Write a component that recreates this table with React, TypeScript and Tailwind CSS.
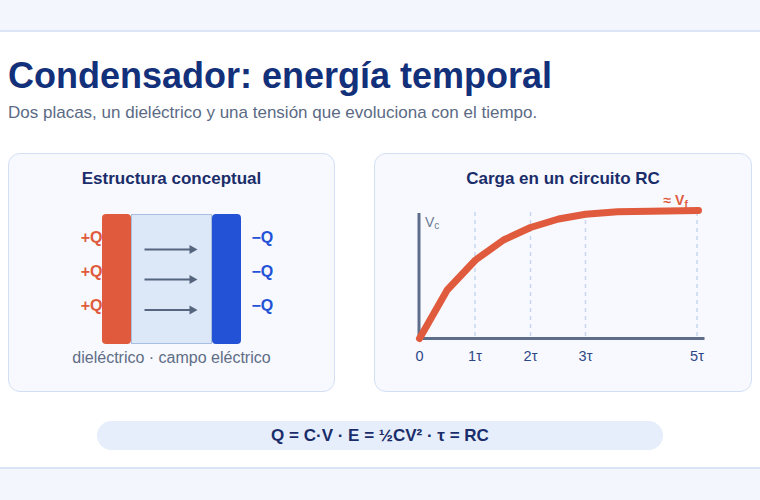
import React from "react";

const RED = "#e05b3d";

function Arrow({ y }: { y: number }) {
  return (
    <g>
      <line x1={14} y1={y} x2={61} y2={y} stroke="#56657e" strokeWidth={2} />
      <polygon points={`59,${y - 4.5} 67,${y} 59,${y + 4.5}`} fill="#56657e" />
    </g>
  );
}

function Structure() {
  return (
    <div className="w-[327px] h-[239px] rounded-[12px] border-[1.5px] border-[#d3dff4] bg-[#f7f9fe] flex flex-col items-center pt-[14.5px]">
      <div className="text-[17px] leading-5 font-bold text-[#1a2d6a]">Estructura conceptual</div>
      <div className="mt-[25px] h-[130px] flex">
        <div className="w-10 flex flex-col items-end pt-[14px] gap-[14px] text-[16px] leading-5 font-bold text-[#e05b3d] relative z-10 -mr-px">
          <span>+Q</span>
          <span>+Q</span>
          <span>+Q</span>
        </div>
        <div className="w-[29px] rounded-[4px] bg-[#e05b3d]" />
        <div className="w-[81px] bg-[#dce7f7] border-[1.5px] border-[#a9bfe2]">
          <svg width="78" height="127" viewBox="1.5 1.5 78 127" className="block">
            <Arrow y={36} />
            <Arrow y={66} />
            <Arrow y={96.5} />
          </svg>
        </div>
        <div className="w-[29px] rounded-[4px] bg-[#2452d6]" />
        <div className="w-10 flex flex-col items-start pl-[11px] pt-[14px] gap-[14px] text-[16px] leading-5 font-bold text-[#2452d6]">
          <span>−Q</span>
          <span>−Q</span>
          <span>−Q</span>
        </div>
      </div>
      <div className="mt-1 text-[16px] leading-5 text-[#5f6d86]">dieléctrico · campo eléctrico</div>
    </div>
  );
}

function Chart() {
  const pts: [number, number][] = [
    [419, 338.5],
    [446.7, 290],
    [475, 260],
    [503, 240],
    [530, 227.5],
    [558, 219],
    [585, 214.3],
    [617, 211.7],
    [698, 210.5],
  ];
  const ticks: [number, string][] = [
    [419, "0"],
    [474.5, "1τ"],
    [530, "2τ"],
    [585, "3τ"],
    [696.5, "5τ"],
  ];
  return (
    <div className="w-[378px] h-[239px] rounded-[12px] border-[1.5px] border-[#d3dff4] bg-[#f7f9fe] flex flex-col items-center pt-[14.5px]">
      <div className="text-[17px] leading-5 font-bold text-[#1a2d6a]">Carga en un circuito RC</div>
      <svg width="375" height="190" viewBox="375.5 189 375 190" className="block">
        {[474.5, 530, 585, 696.5].map((x) => (
          <line key={x} x1={x} y1={212} x2={x} y2={337} stroke="#c8d7ef" strokeWidth={1.5} strokeDasharray="4 4" />
        ))}
        <line x1={418.5} y1={213} x2={418.5} y2={340} stroke="#5e6e8a" strokeWidth={3} />
        <line x1={417} y1={338.5} x2={704} y2={338.5} stroke="#5e6e8a" strokeWidth={3} />
        <polyline
          points={pts.map((p) => p.join(",")).join(" ")}
          fill="none"
          stroke={RED}
          strokeWidth={7}
          strokeLinecap="round"
          strokeLinejoin="round"
        />
        <text x={424.5} y={227} fontSize={14} fill="#6b7a93">
          V<tspan fontSize={10} dy={2}>c</tspan>
        </text>
        <text x={663} y={205} fontSize={14} fontWeight={700} fill={RED}>
          ≈ V<tspan fontSize={10} dy={3}>f</tspan>
        </text>
        {ticks.map(([x, t]) => (
          <text key={t} x={x} y={361} fontSize={14.5} fill="#2c4787" textAnchor="middle">
            {t}
          </text>
        ))}
      </svg>
    </div>
  );
}

export default function App() {
  return (
    <div className="w-[760px] h-[500px] bg-white overflow-hidden font-['Liberation_Sans',Arial,sans-serif]">
      <div className="h-[32px] bg-[#f3f6fc] border-b-2 border-[#dce5f5]" />
      <div className="h-[435px] px-2 pt-6">
        <h1 className="text-[36px] leading-10 font-bold text-[#13307a]">Condensador: energía temporal</h1>
        <p className="mt-[5px] text-[17px] leading-6 text-[#5b6a85]">
          Dos placas, un dieléctrico y una tensión que evoluciona con el tiempo.
        </p>
        <div className="mt-[28px] flex gap-[39px]">
          <Structure />
          <Chart />
        </div>
        <div className="mt-[29px] mx-auto w-[566px] h-[29px] rounded-full bg-[#e6eefc] text-center text-[17px] leading-[29px] font-bold text-[#1a2d6a]">
          Q = C·V · E = ½CV² · τ = RC
        </div>
      </div>
      <div className="h-[33px] bg-[#f3f6fc] border-t-2 border-[#dce5f5]" />
    </div>
  );
}
